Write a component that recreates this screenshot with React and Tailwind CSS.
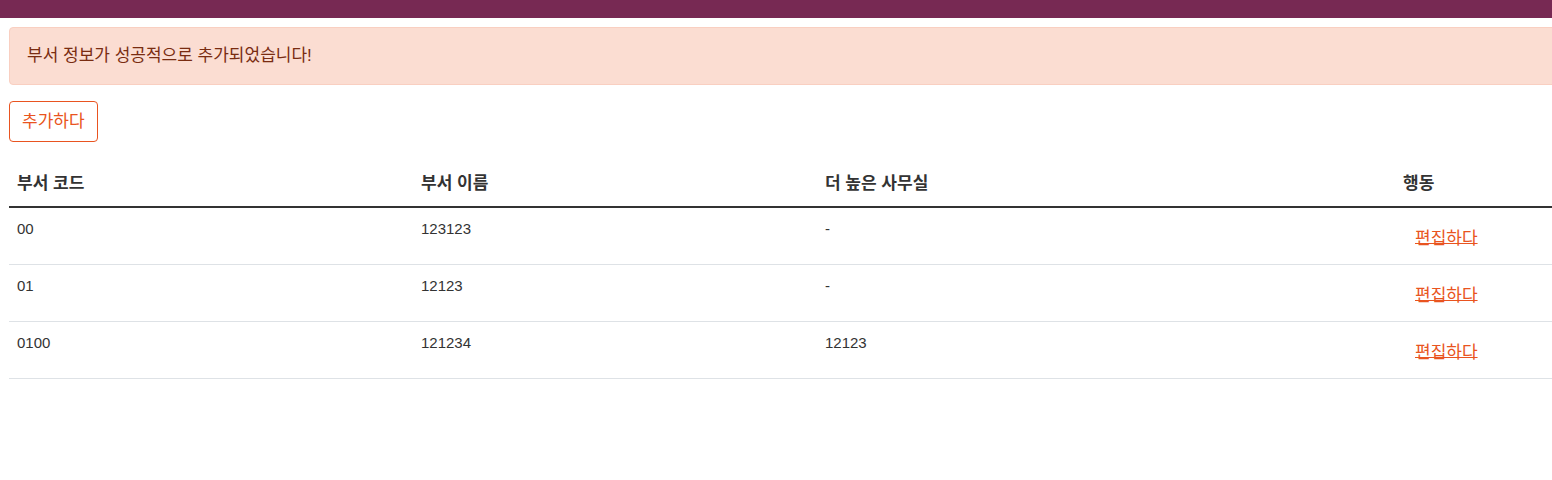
export default function App() {
  const rows = [
    { code: "00", name: "123123", office: "-" },
    { code: "01", name: "12123", office: "-" },
    { code: "0100", name: "121234", office: "12123" },
  ];
  const font = { fontFamily: '"Liberation Sans", "Noto Sans CJK KR", sans-serif' };
  return (
    <div className="w-full overflow-hidden bg-white text-[15px] leading-[22px] text-[#333333]" style={font}>
      <div className="h-[18px] bg-[#772953]" />
      <div className="ml-[9px] w-[1600px]">
        <div className="mt-[9px] flex h-[58px] items-center rounded-[4px] border border-[#f9cfc1] bg-[#fbddd2] px-[17px] text-[17px] text-[#792c11]">
          부서 정보가 성공적으로 추가되었습니다!
        </div>
        <button className="mt-[16px] flex h-[41px] items-center rounded-[4px] border border-[#e95420] bg-white px-[12px] text-[17px] text-[#e95420]">
          추가하다
        </button>
        <table className="mt-[19px] w-full border-collapse text-left">
          <thead>
            <tr className="border-b-2 border-[#333333]">
              <th className="h-[46px] w-[404px] px-[8px] align-middle text-[17px] font-bold">부서 코드</th>
              <th className="h-[46px] w-[404px] px-[8px] align-middle text-[17px] font-bold">부서 이름</th>
              <th className="h-[46px] w-[578px] px-[8px] align-middle text-[17px] font-bold">더 높은 사무실</th>
              <th className="h-[46px] px-[8px] align-middle text-[17px] font-bold">행동</th>
            </tr>
          </thead>
          <tbody>
            {rows.map((r) => (
              <tr key={r.code} className="border-b border-[#dee2e6] align-top">
                <td className="h-[57px] px-[8px] pt-[10px]">{r.code}</td>
                <td className="h-[57px] px-[8px] pt-[10px]">{r.name}</td>
                <td className="h-[57px] px-[8px] pt-[10px]">{r.office}</td>
                <td className="h-[57px] px-[8px] pt-[20px]">
                  <a className="inline-block px-[12px] text-[17px] leading-[22px] text-[#e95420] underline decoration-1 underline-offset-[-1px]">
                    편집하다
                  </a>
                </td>
              </tr>
            ))}
          </tbody>
        </table>
      </div>
    </div>
  );
}
